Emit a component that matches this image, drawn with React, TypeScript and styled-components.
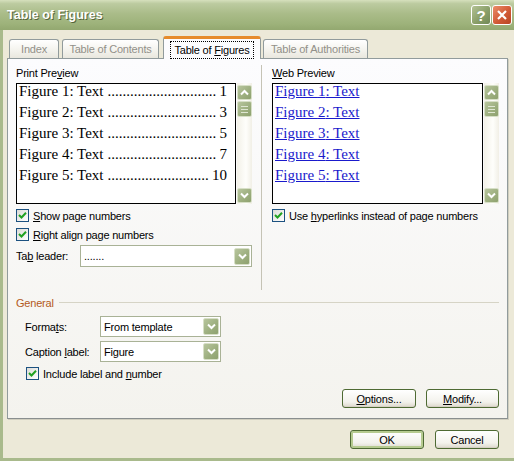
import React from "react";
import styled, { createGlobalStyle } from "styled-components";

const GlobalStyle = createGlobalStyle`
  html, body {
    margin: 0;
    padding: 0;
    background: #ece9d8;
  }
  body {
    font-family: "Liberation Sans", Arial, sans-serif;
    font-size: 11px;
    color: #000;
  }
`;

const Window = styled.div`
  width: 514px;
  height: 461px;
  display: flex;
  flex-direction: column;
  overflow: hidden;
  background: #ece9d8;
  letter-spacing: -0.2px;
`;

const TitleBar = styled.div`
  height: 30px;
  flex: none;
  display: flex;
  align-items: center;
  padding: 0 2px 0 7px;
  background: linear-gradient(
    #d6e0bd 0%,
    #bccba0 12%,
    #aabc89 45%,
    #9db27a 80%,
    #93a870 100%
  );
`;

const Title = styled.div`
  font-size: 12.5px;
  font-weight: bold;
  color: #fff;
  letter-spacing: 0;
  text-shadow: 1px 1px 0 #56663b;
`;

const TitleButtons = styled.div`
  margin-left: auto;
  display: flex;
  gap: 1px;
`;

const CaptionButton = styled.div<{ $close?: boolean }>`
  width: 20px;
  height: 20px;
  box-sizing: border-box;
  border: 1px solid #fff;
  border-radius: 3px;
  display: flex;
  align-items: center;
  justify-content: center;
  color: #fff;
  font-size: 15px;
  font-weight: bold;
  letter-spacing: 0;
  background: ${(p) =>
    p.$close
      ? "linear-gradient(135deg, #eb8e6a, #d25a36 55%, #b84624)"
      : "linear-gradient(135deg, #b3c294, #8a9f69 55%, #728856)"};
`;

const Frame = styled.div`
  flex: 1;
  display: flex;
  flex-direction: column;
  border-left: 3px solid #a9ba8c;
  border-bottom: 3px solid #a9ba8c;
  padding: 6px 6px 0 4px;
`;

const TabStrip = styled.div`
  height: 22px;
  flex: none;
  display: flex;
  align-items: flex-end;
  position: relative;
  z-index: 1;
`;

const Tab = styled.div<{ $active?: boolean; $w: number; $ml: number }>`
  width: ${(p) => p.$w}px;
  margin-left: ${(p) => p.$ml}px;
  height: ${(p) => (p.$active ? 23 : 19)}px;
  margin-bottom: ${(p) => (p.$active ? -1 : 0)}px;
  box-sizing: border-box;
  display: flex;
  align-items: center;
  justify-content: center;
  border: 1px solid #919b9c;
  border-bottom: none;
  border-radius: 3px 3px 0 0;
  color: ${(p) => (p.$active ? "#000" : "#929089")};
  background: ${(p) =>
    p.$active ? "#fcfcfe" : "linear-gradient(#ffffff, #f3f2ec 60%, #e9e7de)"};
  border-top: ${(p) => (p.$active ? "3px solid #e68b2c" : "1px solid #919b9c")};
  padding-top: ${(p) => (p.$active ? 1 : 0)}px;
`;

const FocusLabel = styled.span`
  outline: 1px dotted #000;
  padding: 1px 3px;
  line-height: 14px;
`;

const Panel = styled.div`
  width: 501px;
  height: 361px;
  flex: none;
  box-sizing: border-box;
  border: 1px solid #919b9c;
  border-bottom-color: #8a8f8f;
  box-shadow: 1px 1px 0 #d0cebf;
  background: linear-gradient(#fcfcfe, #f4f3ee);
  padding: 6px 8px 10px 8px;
  display: flex;
  flex-direction: column;
`;

const Columns = styled.div`
  height: 225px;
  flex: none;
  display: flex;
`;

const Column = styled.div<{ $w: number }>`
  width: ${(p) => p.$w}px;
  padding-top: 2px;
  display: flex;
  flex-direction: column;
`;

const Divider = styled.div`
  width: 1px;
  margin: 0 10px 0 9px;
  background: #c5c3b5;
`;

const Label = styled.div`
  height: 13px;
  line-height: 13px;
  margin-bottom: 3px;
  white-space: nowrap;
`;

const U = styled.span`
  text-decoration: underline;
`;

const PreviewRow = styled.div`
  display: flex;
  gap: 1px;
`;

const PreviewBox = styled.div<{ $w: number }>`
  width: ${(p) => p.$w}px;
  height: 121px;
  box-sizing: border-box;
  border: 1px solid #000;
  background: #fff;
  overflow: hidden;
  padding: 0 8px 0 2px;
`;

const FigureList = styled.div`
  margin-top: -3px;
  font-family: "Liberation Serif", "Times New Roman", serif;
  font-size: 15px;
  line-height: 21px;
  letter-spacing: 0;
`;

const FigureRow = styled.div`
  display: flex;
  white-space: nowrap;
`;

const Leader = styled.span`
  margin-left: 4px;
`;

const PageNum = styled.span`
  margin-left: auto;
`;

const WebLink = styled.a`
  display: block;
  color: #1a1acc;
  text-decoration: underline;
  white-space: nowrap;
`;

const ScrollBar = styled.div`
  width: 15px;
  height: 121px;
  box-sizing: border-box;
  padding: 2px 0 1px;
  display: flex;
  flex-direction: column;
  background: linear-gradient(90deg, #f3f1e8, #fefefb 60%, #f1efe6);
`;

const ScrollButton = styled.div<{ $h?: number }>`
  width: 15px;
  height: ${(p) => p.$h ?? 15}px;
  box-sizing: border-box;
  border: 1px solid #d7dfc7;
  border-radius: 2px;
  background: linear-gradient(135deg, #b7c59d, #9cae7e 60%, #8ea16f);
  display: flex;
  align-items: center;
  justify-content: center;
  flex: none;
`;

const Thumb = styled(ScrollButton)`
  margin-top: 1px;
  flex-direction: column;
  gap: 2px;
`;

const Grip = styled.div`
  width: 7px;
  height: 1px;
  background: #dfe6d2;
`;

const ScrollSpace = styled.div`
  flex: 1;
`;

const CheckRow = styled.label<{ $mt?: number; $ml?: number }>`
  display: flex;
  align-items: center;
  gap: 4px;
  height: 13px;
  margin-top: ${(p) => p.$mt ?? 0}px;
  margin-left: ${(p) => p.$ml ?? 0}px;
  white-space: nowrap;
`;

const CheckBox = styled.span`
  width: 13px;
  height: 13px;
  box-sizing: border-box;
  border: 1px solid #1c5180;
  background: linear-gradient(135deg, #dcdcd7, #ffffff);
  display: flex;
  align-items: center;
  justify-content: center;
  flex: none;
`;

const FieldRow = styled.div<{ $mt: number; $ml: number; $lw: number }>`
  display: flex;
  align-items: center;
  margin-top: ${(p) => p.$mt}px;
  margin-left: ${(p) => p.$ml}px;
  > span:first-child {
    width: ${(p) => p.$lw}px;
    flex: none;
    white-space: nowrap;
  }
`;

const Combo = styled.div<{ $w: number; $h: number }>`
  width: ${(p) => p.$w}px;
  height: ${(p) => p.$h}px;
  box-sizing: border-box;
  border: 1px solid #a9b296;
  background: #fff;
  display: flex;
  align-items: center;
  padding: 1px 1px 1px 3px;
`;

const ComboValue = styled.span`
  flex: 1;
  white-space: nowrap;
`;

const DropButton = styled(ScrollButton)`
  width: 16px;
  height: 17px;
`;

const GroupHeader = styled.div`
  margin-top: 6px;
  height: 13px;
  display: flex;
  align-items: center;
  gap: 5px;
  color: #b3591c;
  &::after {
    content: "";
    flex: 1;
    height: 1px;
    background: #d6d4c6;
  }
`;

const ButtonRow = styled.div<{ $mt: number; $gap: number; $pr?: number }>`
  display: flex;
  justify-content: flex-end;
  gap: ${(p) => p.$gap}px;
  margin-top: ${(p) => p.$mt}px;
  padding-right: ${(p) => p.$pr ?? 0}px;
`;

const Button = styled.div<{ $w: number; $default?: boolean }>`
  width: ${(p) => p.$w}px;
  height: 19px;
  box-sizing: border-box;
  border: 1px solid #4e6a33;
  border-radius: 3px;
  background: linear-gradient(#ffffff, #f3f2ec 70%, #dcd8cc);
  display: flex;
  align-items: center;
  justify-content: center;
  box-shadow: ${(p) =>
    p.$default ? "inset 0 0 0 2px #b6cb90" : "inset 0 -1px 0 #d6d0c4"};
`;

const Check = () => (
  <svg width="9" height="9" viewBox="0 0 9 9">
    <path d="M1 4 L3.5 6.5 L8 1.8" fill="none" stroke="#21a121" strokeWidth="2" />
  </svg>
);

const Chevron = ({ up }: { up?: boolean }) => (
  <svg width="9" height="7" viewBox="0 0 9 7">
    <path
      d={up ? "M1 5.5 L4.5 2 L8 5.5" : "M1 1.5 L4.5 5 L8 1.5"}
      fill="none"
      stroke="#fff"
      strokeWidth="2"
    />
  </svg>
);

const Scroll = () => (
  <ScrollBar>
    <ScrollButton>
      <Chevron up />
    </ScrollButton>
    <Thumb $h={16}>
      <Grip />
      <Grip />
      <Grip />
    </Thumb>
    <ScrollSpace />
    <ScrollButton>
      <Chevron />
    </ScrollButton>
  </ScrollBar>
);

const figures = [
  { n: 1, page: 1 },
  { n: 2, page: 3 },
  { n: 3, page: 5 },
  { n: 4, page: 7 },
  { n: 5, page: 10 },
];

// leader dots sized to fill up to the page number
const leader = (page: number) => ".".repeat(page >= 10 ? 27 : 29);

export default function App() {
  return (
    <>
      <GlobalStyle />
      <Window>
        <TitleBar>
          <Title>Table of Figures</Title>
          <TitleButtons>
            <CaptionButton>?</CaptionButton>
            <CaptionButton $close>
              <svg width="12" height="12" viewBox="0 0 12 12">
                <path d="M2 2 L10 10 M10 2 L2 10" stroke="#fff" strokeWidth="2.2" />
              </svg>
            </CaptionButton>
          </TitleButtons>
        </TitleBar>
        <Frame>
          <TabStrip>
            <Tab $w={50} $ml={2}>Index</Tab>
            <Tab $w={97} $ml={3}>Table of Contents</Tab>
            <Tab $w={98} $ml={4} $active>
              <FocusLabel>
                Table of <U>F</U>igures
              </FocusLabel>
            </Tab>
            <Tab $w={105} $ml={2}>Table of Authorities</Tab>
          </TabStrip>
          <Panel>
            <Columns>
              <Column $w={236}>
                <Label>
                  Print Pre<U>v</U>iew
                </Label>
                <PreviewRow>
                  <PreviewBox $w={220}>
                    <FigureList>
                      {figures.map((f) => (
                        <FigureRow key={f.n}>
                          <span>Figure {f.n}: Text</span>
                          <Leader>{leader(f.page)}</Leader>
                          <PageNum>{f.page}</PageNum>
                        </FigureRow>
                      ))}
                    </FigureList>
                  </PreviewBox>
                  <Scroll />
                </PreviewRow>
                <CheckRow $mt={5}>
                  <CheckBox>
                    <Check />
                  </CheckBox>
                  <span>
                    <U>S</U>how page numbers
                  </span>
                </CheckRow>
                <CheckRow $mt={6}>
                  <CheckBox>
                    <Check />
                  </CheckBox>
                  <span>
                    <U>R</U>ight align page numbers
                  </span>
                </CheckRow>
                <FieldRow $mt={4} $ml={0} $lw={64}>
                  <span>
                    Ta<U>b</U> leader:
                  </span>
                  <Combo $w={172} $h={22}>
                    <ComboValue>.......</ComboValue>
                    <DropButton>
                      <Chevron />
                    </DropButton>
                  </Combo>
                </FieldRow>
              </Column>
              <Divider />
              <Column $w={227}>
                <Label>
                  <U>W</U>eb Preview
                </Label>
                <PreviewRow>
                  <PreviewBox $w={211}>
                    <FigureList>
                      {figures.map((f) => (
                        <WebLink key={f.n}>Figure {f.n}: Text</WebLink>
                      ))}
                    </FigureList>
                  </PreviewBox>
                  <Scroll />
                </PreviewRow>
                <CheckRow $mt={5}>
                  <CheckBox>
                    <Check />
                  </CheckBox>
                  <span>
                    Use <U>h</U>yperlinks instead of page numbers
                  </span>
                </CheckRow>
              </Column>
            </Columns>
            <GroupHeader>General</GroupHeader>
            <FieldRow $mt={7} $ml={9} $lw={75}>
              <span>
                Forma<U>t</U>s:
              </span>
              <Combo $w={121} $h={21}>
                <ComboValue>From template</ComboValue>
                <DropButton>
                  <Chevron />
                </DropButton>
              </Combo>
            </FieldRow>
            <FieldRow $mt={4} $ml={9} $lw={75}>
              <span>
                Caption <U>l</U>abel:
              </span>
              <Combo $w={121} $h={21}>
                <ComboValue>Figure</ComboValue>
                <DropButton>
                  <Chevron />
                </DropButton>
              </Combo>
            </FieldRow>
            <CheckRow $mt={5} $ml={10}>
              <CheckBox>
                <Check />
              </CheckBox>
              <span>
                Include label and <U>n</U>umber
              </span>
            </CheckRow>
            <ButtonRow $mt={9} $gap={10}>
              <Button $w={74}>
                <span>
                  <U>O</U>ptions...
                </span>
              </Button>
              <Button $w={73}>
                <span>
                  <U>M</U>odify...
                </span>
              </Button>
            </ButtonRow>
          </Panel>
          <ButtonRow $mt={11} $gap={11} $pr={9}>
            <Button $w={74} $default>
              OK
            </Button>
            <Button $w={64}>Cancel</Button>
          </ButtonRow>
        </Frame>
      </Window>
    </>
  );
}
